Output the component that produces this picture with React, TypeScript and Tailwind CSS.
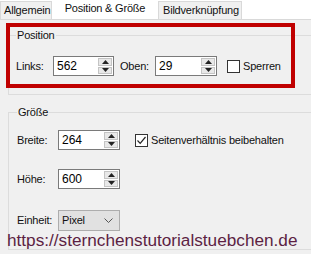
import React from "react";

const Arrow = ({ up }: { up?: boolean }) => (
	<svg width="7" height="4" viewBox="0 0 7 4" className="block">
		<path d={up ? "M0 4 L3.5 0 L7 4 Z" : "M0 0 L3.5 4 L7 0 Z"} fill="#222" />
	</svg>
);

function Spin({ value, width }: { value: string; width: string }) {
	return (
		<div className={`flex h-[20px] ${width} border border-[#7a7a7a] bg-white`}>
			<span className="flex-1 pl-[3px] text-[12px] leading-[18px] tracking-normal text-black">{value}</span>
			<div className="flex w-[16px] flex-col gap-px bg-white p-px">
				<div className="flex flex-1 items-center justify-center border border-[#c4c4c4] bg-[#e8e8e8]">
					<Arrow up />
				</div>
				<div className="flex flex-1 items-center justify-center border border-[#c4c4c4] bg-[#e8e8e8]">
					<Arrow />
				</div>
			</div>
		</div>
	);
}

function Check({ checked }: { checked?: boolean }) {
	return (
		<div className="flex h-[13px] w-[13px] items-center justify-center border border-[#333] bg-white">
			{checked && (
				<svg width="11" height="11" viewBox="0 0 11 11">
					<path d="M1.5 5.5 L4.2 8.3 L9.5 2" stroke="#222" strokeWidth="1.2" fill="none" />
				</svg>
			)}
		</div>
	);
}

export default function App() {
	return (
		<div className="relative h-[254px] w-[311px] overflow-hidden bg-[#f0f0f0] font-['Liberation_Sans',Arial,sans-serif] text-[11px] tracking-[-0.2px] text-[#111]">
			{/* tabs */}
			<div className="flex h-[20px] items-end border-b border-[#d9d9d9] bg-white">
				<div className="flex h-[18px] w-[52px] items-center border border-b-0 border-[#d9d9d9] bg-[#f0f0f0] pl-[3px]">
					Allgemein
				</div>
				<div className="flex h-[20px] w-[106px] items-center justify-center bg-white pb-[2px]">
					Position &amp; Größe
				</div>
				<div className="flex h-[18px] w-[84px] items-center border border-b-0 border-[#d9d9d9] bg-[#f0f0f0] pl-[4px]">
					Bildverknüpfung
				</div>
			</div>

			<div className="pl-[8px]">
				<fieldset className="-mr-[20px] mt-[8px] h-[67px] border border-[#dcdcdc] pl-[7px]">
					<legend className="px-[1px] leading-[15px]">Position</legend>
					<div className="mt-[13px] flex items-center">
						<span className="w-[37px]">Links:</span>
						<Spin value="562" width="w-[61px]" />
						<span className="ml-[6px] w-[35px]">Oben:</span>
						<Spin value="29" width="w-[62px]" />
						<div className="ml-[10px]">
							<Check />
						</div>
						<span className="ml-[3px]">Sperren</span>
					</div>
				</fieldset>

				<fieldset className="-mr-[20px] mt-[10px] h-[145px] border border-[#dcdcdc] pl-[8px]">
					<legend className="px-[1px] leading-[15px]">Größe</legend>
					<div className="mt-[10px] flex items-center">
						<span className="w-[41px]">Breite:</span>
						<Spin value="264" width="w-[62px]" />
						<div className="ml-[15px]">
							<Check checked />
						</div>
						<span className="ml-[3px]">Seitenverhältnis beibehalten</span>
					</div>
					<div className="mt-[19px] flex items-center">
						<span className="w-[41px]">Höhe:</span>
						<Spin value="600" width="w-[62px]" />
					</div>
					<div className="mt-[21px] flex items-center">
						<span className="w-[41px]">Einheit:</span>
						<div className="flex h-[21px] w-[62px] items-center justify-between border border-[#adadad] bg-[#e1e1e1] pl-[3px] pr-[6px]">
							<span>Pixel</span>
							<svg width="9" height="5" viewBox="0 0 9 5">
								<path d="M0.5 0.5 L4.5 4.5 L8.5 0.5" stroke="#555" fill="none" />
							</svg>
						</div>
					</div>
				</fieldset>
			</div>

			{/* watermark */}
			<div className="absolute left-[7px] top-[229px] text-[17.2px] leading-[22px] tracking-normal text-[#5c1f43]">
				https://sternchenstutorialstuebchen.de
			</div>

			{/* red highlight frame */}
			<div className="absolute left-[6px] top-[23px] h-[65px] w-[289px] border-[4px] border-[#c00000]" />
		</div>
	);
}
